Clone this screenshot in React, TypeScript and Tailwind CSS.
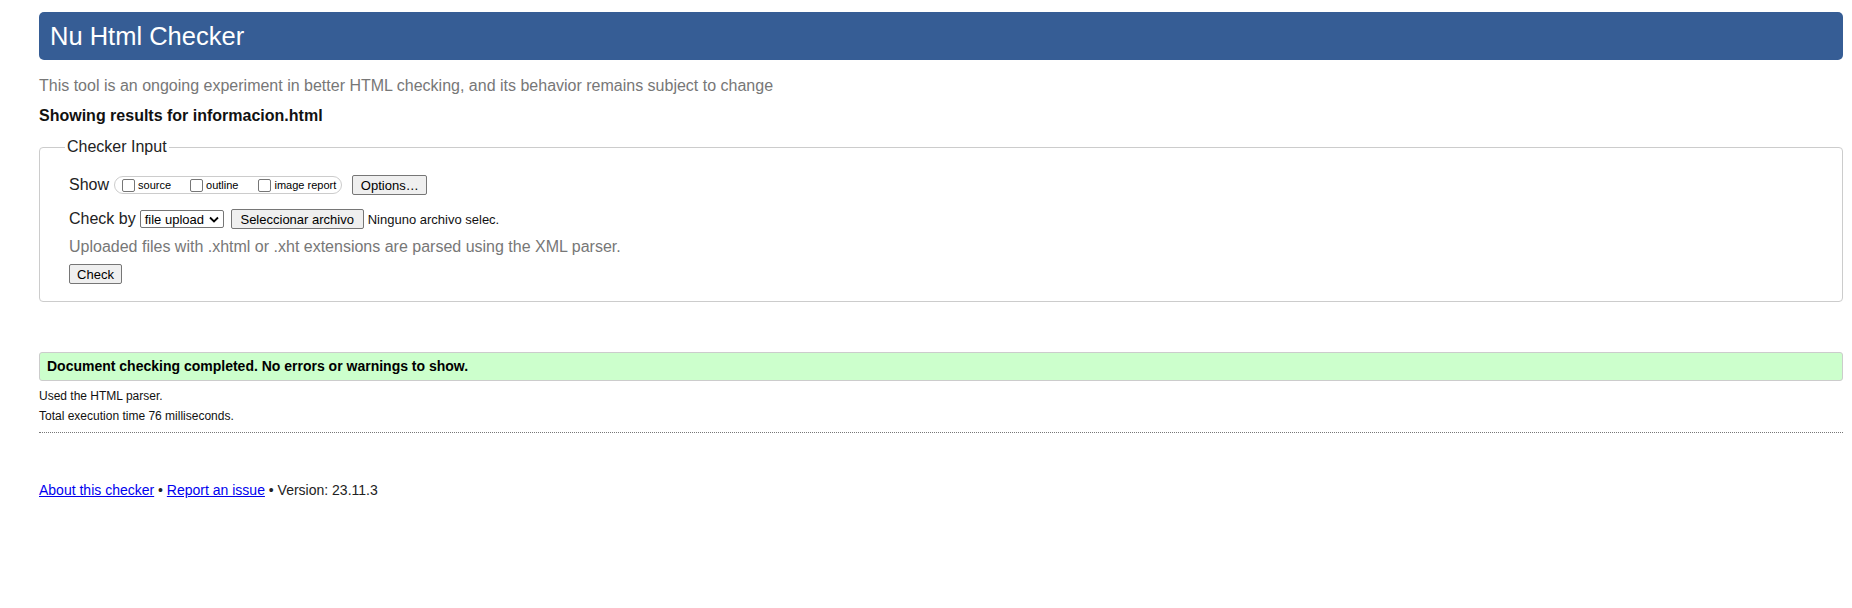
import React from "react";

const btn =
  "h-[20px] px-[7px] bg-[#efefef] border border-[#767676] rounded-[2px] text-[13px] leading-none text-black flex items-center";

function Cb({ label }: { label: string }) {
  return (
    <label className="flex items-center">
      <span className="w-[13px] h-[13px] border border-[#767676] rounded-[2px] bg-white" />
      <span className="ml-[3px] text-[11px] leading-none text-black">{label}</span>
    </label>
  );
}

export default function App() {
  return (
    <div
      className="min-h-[608px] bg-white pl-[39px] pr-[9px] pt-[12px] text-black"
      style={{ fontFamily: '"Liberation Sans", Arial, sans-serif' }}
    >
      <div className="h-[48px] rounded-[5px] bg-[#365d95] text-white text-[25.5px] pl-[11px] flex items-center">
        Nu Html Checker
      </div>
      <p className="mt-[17px] text-[16px] leading-[18px] text-[#777]">
        This tool is an ongoing experiment in better HTML checking, and its behavior remains subject to change
      </p>
      <p className="mt-[12px] text-[16px] leading-[18px] font-bold text-[#111]">
        Showing results for informacion.html
      </p>

      <fieldset className="mt-[13px] border border-[#cccccc] rounded-[4px] pb-[17px]">
        <legend className="ml-[25px] px-[2px] text-[16px] leading-[18px] text-[#222]">Checker Input</legend>
        <div className="pl-[29px]">
          <div className="mt-[19px] h-[20px] flex items-center">
            <span className="text-[16px] leading-none text-[#222]">Show</span>
            <div className="ml-[5px] h-[18px] border border-[#cccccc] rounded-[9px] flex items-center pl-[7px] pr-[5px]">
              <Cb label="source" />
              <span className="w-[19px]" />
              <Cb label="outline" />
              <span className="w-[20px]" />
              <Cb label="image report" />
            </div>
            <button className={`${btn} ml-[10px] w-[75px] justify-center`}>Options…</button>
          </div>
          <div className="mt-[14px] h-[20px] flex items-center">
            <span className="text-[16px] leading-none text-[#222]">Check by</span>
            <div className="ml-[4px] w-[84px] h-[18px] border border-[#767676] rounded-[2px] bg-white flex items-center pl-[4px] pr-[4px] text-[13px] leading-none">
              <span className="flex-1">file upload</span>
              <svg width="10" height="7" viewBox="0 0 10 7" className="ml-[2px]">
                <path d="M1 1.5 L5 5.5 L9 1.5" fill="none" stroke="#000" strokeWidth="1.8" />
              </svg>
            </div>
            <button className={`${btn} ml-[7px] w-[133px] justify-center`}>Seleccionar archivo</button>
            <span className="ml-[4px] text-[13px] leading-none text-[#111]">Ninguno archivo selec.</span>
          </div>
          <p className="mt-[8px] h-[20px] flex items-center text-[16px] leading-none text-[#777]">
            Uploaded files with .xhtml or .xht extensions are parsed using the XML parser.
          </p>
          <div className="mt-[7px]">
            <button className={`${btn} w-[53px] justify-center`}>Check</button>
          </div>
        </div>
      </fieldset>

      <div className="mt-[50px] h-[29px] bg-[#ccffcc] border border-[#cccccc] rounded-[3px] pl-[7px] flex items-center text-[14px] font-bold text-black">
        Document checking completed. No errors or warnings to show.
      </div>
      <p className="mt-[5px] text-[12px] leading-[20px] text-[#111]">Used the HTML parser.</p>
      <p className="text-[12px] leading-[20px] text-[#111]">Total execution time 76 milliseconds.</p>
      <div className="mt-[6px] border-t border-dotted border-[#777]" />
      <p className="mt-[48px] text-[14px] leading-[18px] text-[#222]">
        <a href="#" className="text-[#0000ee] underline">About this checker</a>
        {" • "}
        <a href="#" className="text-[#0000ee] underline">Report an issue</a>
        {" • Version: 23.11.3"}
      </p>
    </div>
  );
}
